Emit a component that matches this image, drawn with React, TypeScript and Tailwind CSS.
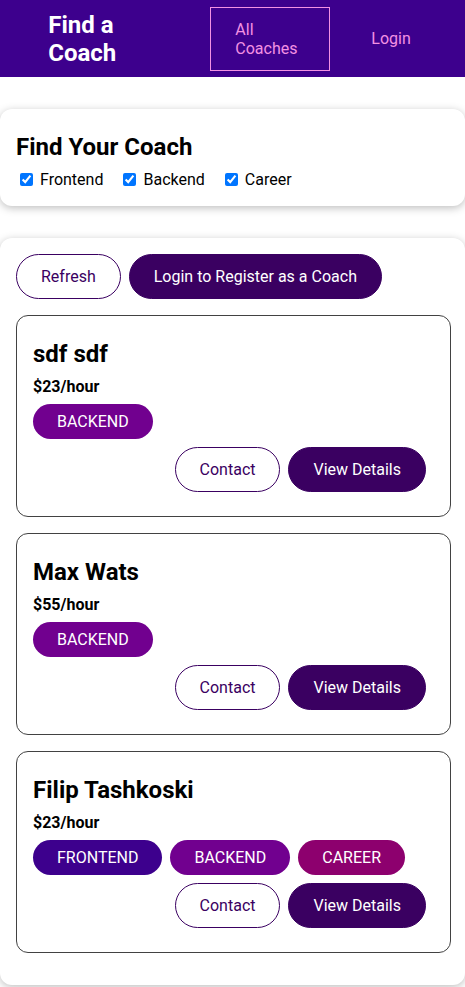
const coaches = [
  { id: 'c1', name: 'sdf sdf', rate: 23, areas: ['backend'] },
  { id: 'c2', name: 'Max Wats', rate: 55, areas: ['backend'] },
  { id: 'c3', name: 'Filip Tashkoski', rate: 23, areas: ['frontend', 'backend', 'career'] },
];

const badgeColors: Record<string, string> = {
  frontend: 'bg-[#3d008d]',
  backend: 'bg-[#71008f]',
  career: 'bg-[#8d006e]',
};

const filters = ['Frontend', 'Backend', 'Career'];

function Header() {
  return (
    <header className="w-full h-[77px] bg-[#3d008d] flex items-center justify-center">
      <nav className="w-[90%] mx-auto flex justify-between items-center">
        <h1 className="m-0 text-[24px] leading-[28px] font-bold">
          <a href="#" className="block w-[150px] px-6 py-3 border border-transparent text-white">
            Find a Coach
          </a>
        </h1>
        <ul className="flex items-center justify-center m-0 p-0 list-none -mr-[2px]">
          <li className="mx-2">
            <a href="#" className="block w-[120px] px-6 py-3 border border-[#f391e3] text-[#f391e3]">
              All Coaches
            </a>
          </li>
          <li className="mx-2">
            <a href="#" className="block px-6 py-3 border border-transparent text-[#f391e3]">
              Login
            </a>
          </li>
        </ul>
      </nav>
    </header>
  );
}

function Card({ children }: { children: React.ReactNode }) {
  return (
    <div className="rounded-xl shadow-[0_2px_8px_rgba(0,0,0,0.26)] p-4 my-8 mx-auto max-w-[40rem] bg-white">
      {children}
    </div>
  );
}

function CoachItem({ name, rate, areas }: { name: string; rate: number; areas: string[] }) {
  return (
    <li className="my-4 border border-[#424242] rounded-xl p-4">
      <h3 className="text-[24px] leading-[29px] font-bold my-2">{name}</h3>
      <h4 className="text-[16px] font-bold my-2">${rate}/hour</h4>
      <div className="my-2 flex flex-wrap">
        {areas.map((a) => (
          <span key={a} className={`inline-block rounded-[30px] px-6 py-2 mr-2 text-white uppercase ${badgeColors[a]}`}>
            {a}
          </span>
        ))}
      </div>
      <div className="my-2 flex justify-end">
        <button className="px-6 py-3 mr-2 rounded-[30px] border border-[#3a0061] bg-transparent text-[#3a0061]">
          Contact
        </button>
        <button className="px-6 py-3 mr-2 rounded-[30px] border border-[#3a0061] bg-[#3a0061] text-white">
          View Details
        </button>
      </div>
    </li>
  );
}

export default function App() {
  return (
    <div className="min-h-screen bg-white text-black leading-[19px] font-['Roboto',sans-serif] text-[16px]">
      <Header />

      {/* Filter */}
      <section>
        <Card>
          <h2 className="text-[24px] leading-[28px] font-bold my-2">Find Your Coach</h2>
          <div className="leading-[20px]">
            {filters.map((f) => (
              <span key={f} className="mr-4">
                <input type="checkbox" id={f} defaultChecked className="align-middle ml-1 mr-[3px] my-[3px]" />
                <label htmlFor={f} className="align-middle ml-1">{f}</label>
              </span>
            ))}
          </div>
        </Card>
      </section>

      {/* List */}
      <section>
        <Card>
          <div className="flex">
            <button className="px-6 py-3 mr-2 rounded-[30px] border border-[#3a0061] bg-transparent text-[#3a0061]">
              Refresh
            </button>
            <button className="px-6 py-3 mr-2 rounded-[30px] border border-[#3a0061] bg-[#3a0061] text-white">
              Login to Register as a Coach
            </button>
          </div>
          <ul className="list-none m-0 p-0 -mr-[2px]">
            {coaches.map((c) => (
              <CoachItem key={c.id} name={c.name} rate={c.rate} areas={c.areas} />
            ))}
          </ul>
        </Card>
      </section>
    </div>
  );
}
